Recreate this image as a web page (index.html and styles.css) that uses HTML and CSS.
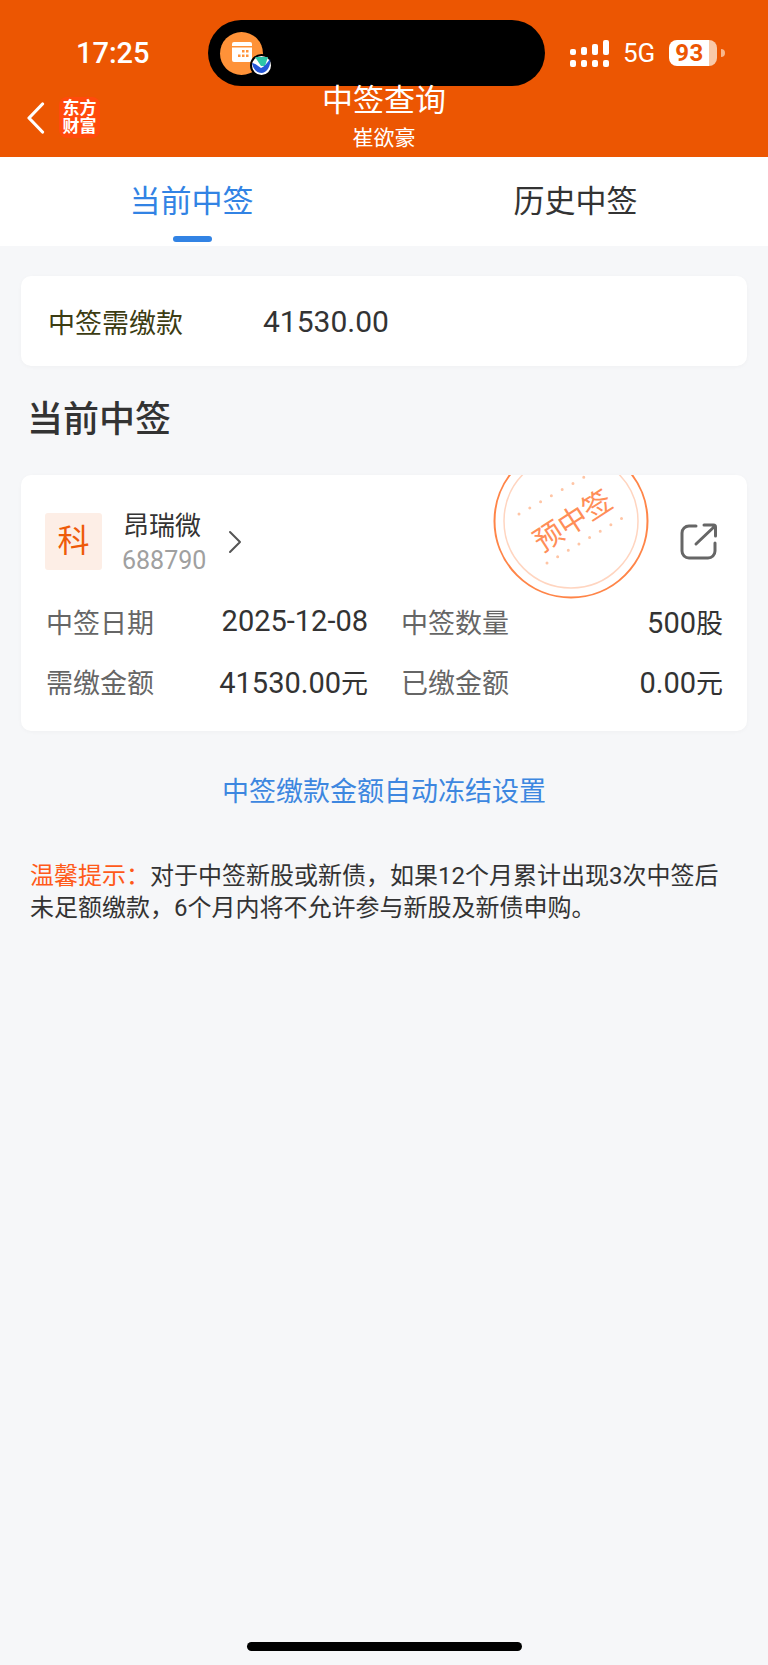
FILE: index.html
```html
<!DOCTYPE html>
<html lang="zh-CN">
<head>
    <meta charset="UTF-8">
    <title>中签查询</title>
    <link rel="stylesheet" href="styles.css">
</head>
<body>
<div class="page">
    <header class="header">
        <div class="status-bar">
            <span class="time">17:25</span>
            <div class="island">
                <div class="island-app">
                    <svg width="20" height="20" viewBox="0 0 20 20">
                        <path d="M2 0h16a2 2 0 0 1 2 2v2H0V2a2 2 0 0 1 2-2z" fill="#fff"/>
                        <path d="M0 5.500h20V18a2 2 0 0 1-2 2H2a2 2 0 0 1-2-2z" fill="#fff"/>
                        <g fill="#ff9238">
                            <rect x="10" y="8" width="2.500" height="2.500"/>
                            <rect x="14" y="8" width="2.500" height="2.500"/>
                            <rect x="6" y="12.500" width="2.500" height="2.500"/>
                            <rect x="10" y="12.500" width="2.500" height="2.500"/>
                            <rect x="14" y="12.500" width="2.500" height="2.500"/>
                        </g>
                    </svg>
                    <div class="island-badge">
                        <svg width="19" height="17" viewBox="0 0 19 17">
                            <path d="M3 0h13l-3 9-4 0z" fill="#2cc5a8"/>
                            <path d="M0 6c3 0 6 3 9 5 3-1 6-5 9-9 1 6-2 13-8 14C5 16 1 12 0 6z" fill="#2456d8"/>
                        </svg>
                    </div>
                </div>
            </div>
            <div class="signal">
                <div class="signal-col"><i class="s1"></i><b></b></div>
                <div class="signal-col"><i class="s2"></i><b></b></div>
                <div class="signal-col"><i class="s3"></i><b></b></div>
                <div class="signal-col"><i class="s4"></i><b></b></div>
            </div>
            <span class="net">5G</span>
            <div class="battery"><span>93</span></div>
            <div class="battery-nub"></div>
        </div>
        <div class="nav">
            <div class="nav-left">
                <svg class="back" width="19" height="32" viewBox="0 0 19 32">
                    <path d="M16.500 2L3 16l13.500 14" fill="none" stroke="#fff" stroke-width="3.200" stroke-linecap="round" stroke-linejoin="round"/>
                </svg>
                <div class="logo">东方<br>财富</div>
            </div>
            <div class="nav-title">
                <div class="title">中签查询</div>
                <div class="subtitle">崔欲豪</div>
            </div>
        </div>
    </header>

    <div class="tabs">
        <div class="tab active">当前中签</div>
        <div class="tab">历史中签</div>
    </div>

    <div class="summary card">
        <span class="summary-label">中签需缴款</span>
        <span class="summary-value">41530.00</span>
    </div>

    <h2 class="section-title">当前中签</h2>

    <div class="lot card">
        <div class="stamp">
            <svg width="156" height="156" viewBox="0 0 156 156">
                <circle cx="78" cy="78" r="76.500" fill="none" stroke="#ff8548" stroke-width="2"/>
                <circle cx="78" cy="78" r="67" fill="none" stroke="#ffd5c0" stroke-width="1.500"/>
                <g fill="none" stroke="#ffc5a5" stroke-width="3" stroke-linecap="round" stroke-dasharray="0 12.400">
                    <path d="M26 71L102 28"/>
                    <path d="M54 120L131 74"/>
                </g>
            </svg>
            <span class="stamp-text">预中签</span>
        </div>
        <div class="lot-head">
            <div class="market">科</div>
            <div class="stock">
                <div class="stock-name">昂瑞微</div>
                <div class="stock-code">688790</div>
            </div>
            <svg class="chevron" width="15" height="24" viewBox="0 0 15 24">
                <path d="M2 2l10 10L2 22" fill="none" stroke="#555" stroke-width="2" stroke-linecap="round" stroke-linejoin="round"/>
            </svg>
            <svg class="share" width="38" height="37" viewBox="0 0 38 37">
                <path d="M16 3H9a7 7 0 0 0-7 7v18a7 7 0 0 0 7 7h19a7 7 0 0 0 7-7v-8" fill="none" stroke="#666" stroke-width="3" stroke-linecap="round"/>
                <path d="M16 21L35 3M24 2h9.500a2 2 0 0 1 2 2v9" fill="none" stroke="#666" stroke-width="3" stroke-linecap="round"/>
            </svg>
        </div>
        <div class="lot-grid">
            <div class="lot-cell"><span class="lot-label">中签日期</span><span class="lot-value">2025-12-08</span></div>
            <div class="lot-cell"><span class="lot-label">中签数量</span><span class="lot-value">500<span class="unit">股</span></span></div>
            <div class="lot-cell"><span class="lot-label">需缴金额</span><span class="lot-value">41530.00<span class="unit">元</span></span></div>
            <div class="lot-cell"><span class="lot-label">已缴金额</span><span class="lot-value">0.00<span class="unit">元</span></span></div>
        </div>
    </div>

    <div class="freeze-link">中签缴款金额自动冻结设置</div>

    <p class="notice"><span class="notice-tag">温馨提示：</span>对于中签新股或新债，如果12个月累计出现3次中签后未足额缴款，6个月内将不允许参与新股及新债申购。</p>

    <div class="home-bar"></div>
</div>
</body>
</html>
```

FILE: styles.css
```css
* {
    box-sizing: border-box;
}

body {
    margin: 0;
    background-color: #f6f7f9;
    font-family: Roboto, "Noto Sans CJK SC", sans-serif;
    color: #333;
}

.page {
    display: flex;
    flex-direction: column;
    min-height: 1665px;
}

.header {
    height: 157px;
    background-color: #ec5602;
    color: #fff;
}

.status-bar {
    display: flex;
    align-items: center;
    height: 66px;
    margin-top: 0;
    padding-left: 76px;
    position: relative;
    top: 20px;
}

.time {
    width: 132px;
    font-size: 29px;
    font-weight: 500;
}

.island {
    display: flex;
    align-items: center;
    width: 337px;
    height: 66px;
    padding-left: 12px;
    border-radius: 33px;
    background-color: #000;
}

.island-app {
    display: flex;
    justify-content: center;
    align-items: center;
    position: relative;
    width: 43px;
    height: 43px;
    border-radius: 50%;
    background-color: #ff9238;
}

.island-app > svg {
    margin-top: -3px;
}

.island-badge {
    display: flex;
    justify-content: center;
    align-items: center;
    position: absolute;
    left: 30px;
    top: 22px;
    width: 23px;
    height: 23px;
    border: 2px solid #000;
    border-radius: 50%;
    background-color: #fff;
}

.signal {
    display: flex;
    gap: 5px;
    margin-left: 25px;
}

.signal-col {
    display: flex;
    flex-direction: column;
    justify-content: flex-end;
    gap: 5px;
    width: 6px;
    height: 27px;
}

.signal-col i,
.signal-col b {
    display: block;
    width: 6px;
    border-radius: 2px;
    background-color: #fff;
}

.signal-col b {
    height: 7px;
}

.signal-col .s1 { height: 6px; }
.signal-col .s2 { height: 8px; }
.signal-col .s3 { height: 11px; }
.signal-col .s4 { height: 15px; }

.net {
    margin-left: 14px;
    font-size: 26px;
}

.battery {
    display: flex;
    align-items: center;
    width: 48px;
    height: 26px;
    margin-left: 14px;
    padding-left: 6px;
    border-radius: 8px;
    background: linear-gradient(to right, #fff 84%, #f9c9a8 84%);
    color: #ec5602;
    font-size: 24px;
    font-weight: 700;
    letter-spacing: 0.5px;
}

.battery-nub {
    width: 4px;
    height: 8px;
    margin-left: 4px;
    border-radius: 0 4px 4px 0;
    background-color: #f9b68c;
}

.nav {
    display: flex;
    position: relative;
    top: 20px;
    height: 71px;
}

.nav-left {
    display: flex;
    align-items: center;
    height: 41px;
    margin-top: 11px;
    padding-left: 26px;
}

.logo {
    width: 41px;
    height: 41px;
    margin-left: 14px;
    padding-top: 2px;
    border-radius: 8px;
    background-color: #ff4a0c;
    font-size: 17px;
    font-weight: 700;
    line-height: 18px;
    text-align: center;
}

.nav-title {
    position: absolute;
    left: 0;
    right: 0;
    text-align: center;
}

.title {
    margin-top: -4px;
    font-size: 31px;
    line-height: 38px;
}

.subtitle {
    margin-top: 3px;
    font-size: 21px;
    line-height: 30px;
}

.tabs {
    display: flex;
    height: 89px;
    background-color: #fff;
}

.tab {
    flex: 1;
    position: relative;
    padding-top: 24px;
    padding-right: 1px;
    font-size: 31px;
    line-height: 42px;
    text-align: center;
}

.tab.active {
    color: #3283e4;
}

.tab.active::after {
    content: "";
    position: absolute;
    left: 173px;
    top: 79px;
    width: 39px;
    height: 6px;
    border-radius: 3px;
    background-color: #3283e4;
}

.card {
    margin: 0 21px;
    border-radius: 10px;
    background-color: #fff;
    box-shadow: 0 1px 4px rgba(0, 0, 0, 0.03);
}

.summary {
    display: flex;
    align-items: center;
    height: 90px;
    margin-top: 30px;
    padding-left: 27px;
}

.summary-label {
    width: 215px;
    color: #3c3c12;
    font-size: 27px;
}

.summary-value {
    font-size: 30px;
    color: #333;
}

.section-title {
    height: 40px;
    margin: 34px 0 35px 27px;
    color: #333;
    font-size: 36px;
    font-weight: 500;
    line-height: 40px;
}

.lot {
    position: relative;
    overflow: hidden;
    padding: 38px 24px 30px 25px;
}

.stamp {
    position: absolute;
    left: 472px;
    top: -32px;
    width: 156px;
    height: 156px;
}

.stamp svg {
    display: block;
}

.stamp-text {
    position: absolute;
    left: 30px;
    top: 58px;
    width: 100px;
    color: #ff8e58;
    font-size: 29px;
    line-height: 40px;
    text-align: center;
    white-space: nowrap;
    transform: rotate(-33deg);
}

.lot-head {
    display: flex;
    align-items: center;
    position: relative;
    height: 57px;
}

.market {
    width: 57px;
    height: 57px;
    margin-left: -1px;
    border-radius: 3px;
    background-color: #fdeee6;
    color: #ee5a0a;
    font-size: 32px;
    line-height: 57px;
    text-align: center;
}

.stock {
    margin-left: 20px;
    margin-top: 4px;
}

.stock-name {
    padding-left: 1px;
    color: #333;
    font-size: 26px;
    line-height: 34px;
}

.stock-code {
    color: #a0a0a0;
    font-size: 25px;
    line-height: 35px;
}

.chevron {
    margin-left: 22px;
}

.share {
    margin-left: auto;
    margin-right: 5px;
}

.lot-grid {
    display: grid;
    grid-template-columns: 322px 322px;
    column-gap: 33px;
    row-gap: 20px;
    margin-top: 31px;
}

.lot-cell {
    display: flex;
    justify-content: space-between;
    align-items: center;
    height: 40px;
}

.lot-label {
    color: #666;
    font-size: 27px;
}

.lot-value {
    color: #333;
    font-size: 29px;
}

.unit {
    font-size: 27px;
}

.freeze-link {
    margin-top: 41px;
    color: #3d87e0;
    font-size: 27px;
    line-height: 40px;
    text-align: center;
}

.notice {
    margin: 48px 28px 0 30px;
    color: #333;
    font-size: 24px;
    line-height: 32px;
}

.notice-tag {
    color: #ff5a1a;
}

.home-bar {
    width: 275px;
    height: 9px;
    margin: auto auto 14px;
    border-radius: 5px;
    background-color: #000;
}
```
